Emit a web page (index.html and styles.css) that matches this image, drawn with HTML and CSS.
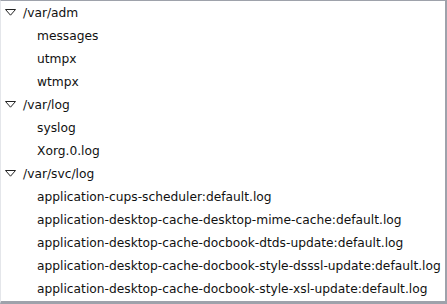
FILE: index.html
```html
<!DOCTYPE html>
<html>
<head>
<meta charset="utf-8">
<link rel="stylesheet" href="styles.css">
</head>
<body>
<div class="tree">
  <div class="row parent"><svg class="tw" width="11" height="7" viewBox="0 0 11 7"><path d="M0.5 0.5 H10.5 L5.5 6.2 Z" fill="#fff" stroke="#222" stroke-width="1"/></svg><span>/var/adm</span></div>
  <div class="row child">messages</div>
  <div class="row child">utmpx</div>
  <div class="row child">wtmpx</div>
  <div class="row parent"><svg class="tw" width="11" height="7" viewBox="0 0 11 7"><path d="M0.5 0.5 H10.5 L5.5 6.2 Z" fill="#fff" stroke="#222" stroke-width="1"/></svg><span>/var/log</span></div>
  <div class="row child">syslog</div>
  <div class="row child">Xorg.0.log</div>
  <div class="row parent"><svg class="tw" width="11" height="7" viewBox="0 0 11 7"><path d="M0.5 0.5 H10.5 L5.5 6.2 Z" fill="#fff" stroke="#222" stroke-width="1"/></svg><span>/var/svc/log</span></div>
  <div class="row child">application-cups-scheduler:default.log</div>
  <div class="row child">application-desktop-cache-desktop-mime-cache:default.log</div>
  <div class="row child">application-desktop-cache-docbook-dtds-update:default.log</div>
  <div class="row child">application-desktop-cache-docbook-style-dsssl-update:default.log</div>
  <div class="row child">application-desktop-cache-docbook-style-xsl-update:default.log</div>
</div>
</body>
</html>
```
FILE: styles.css
```css
html, body {
  margin: 0;
  padding: 0;
  background: #fff;
}
.tree {
  width: 447px;
  height: 304px;
  box-sizing: border-box;
  border-top: 1px solid #9ea2ab;
  border-right: 2px solid #9ea2ab;
  border-bottom: 3px solid #9ea2ab;
  border-left: 1px solid #e4e6ea;
  overflow: hidden;
  font-family: "DejaVu Sans", sans-serif;
  font-size: 12.25px;
  color: #111;
}
.row {
  height: 23px;
  display: flex;
  align-items: center;
  white-space: nowrap;
}
.parent {
  padding-left: 4px;
}
.tw {
  margin-right: 7px;
  flex: none;
}
.child {
  padding-left: 36px;
}
```
